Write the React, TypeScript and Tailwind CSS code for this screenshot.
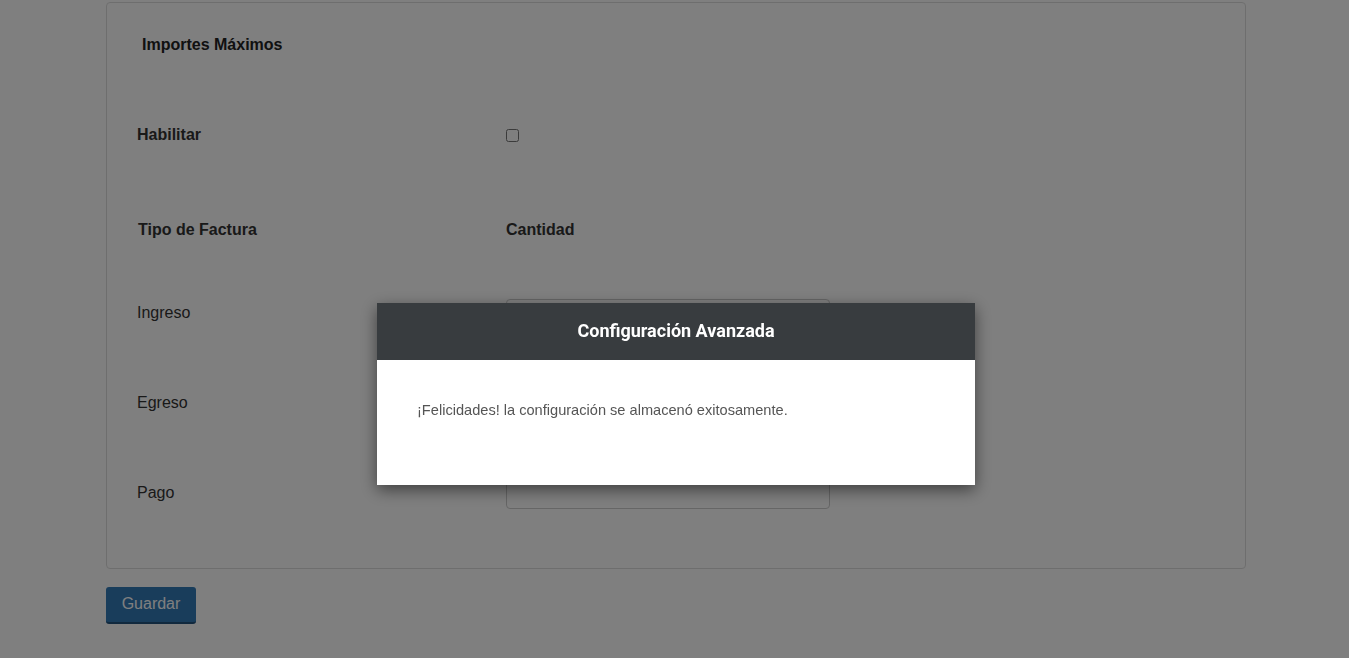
import React from 'react';

const ROWS = ['Ingreso', 'Egreso', 'Pago'];

export default function App() {
    return (
        <div className="min-h-[658px] bg-white text-[#333] font-['Liberation_Sans',Arial,sans-serif]">
            <div className="ml-[106px] w-[1140px] pt-[2px]">
                <section className="border border-[#dddddd] rounded pl-[30px] pb-[29px]">
                    <div className="h-[82px] pt-[2px] flex items-center pl-[5px]">
                        <h3 className="text-base font-bold text-[#222]">Importes Máximos</h3>
                    </div>
                    <div className="mt-[5px] h-[90px] flex items-center">
                        <label className="w-[369px] text-base font-bold">Habilitar</label>
                        <input type="checkbox" className="w-[13px] h-[13px] m-0" />
                    </div>
                    <div className="mt-[30px] h-[40px] flex items-center text-base font-bold">
                        <div className="w-[369px] pl-px">Tipo de Factura</div>
                        <div>Cantidad</div>
                    </div>
                    <div className="mt-[19px]">
                        {ROWS.map((r) => (
                            <div key={r} className="h-[90px] flex items-center">
                                <label className="w-[369px] text-base mb-[2px]">{r}</label>
                                <input type="text" className="w-[324px] h-[30px] border border-[#cccccc] rounded bg-white" />
                            </div>
                        ))}
                    </div>
                </section>
                <button className="mt-[18px] w-[90px] h-[37px] pb-[2px] bg-[#337ab7] border-b-2 border-[#23527c] rounded-[3px] text-white text-base">
                    Guardar
                </button>
            </div>

            {/* modal backdrop */}
            <div className="fixed inset-0 bg-black/50">
                <div className="ml-[377px] mt-[303px] w-[598px] bg-white shadow-[0_5px_15px_rgba(0,0,0,0.5)]">
                    <div className="h-[57px] pb-px bg-[#383c3f] flex items-center justify-center">
                        <h4 className="text-white text-lg font-bold font-['Roboto',sans-serif]">Configuración Avanzada</h4>
                    </div>
                    <div className="h-[125px] pt-[40px] px-10">
                        <p className="text-[14.6px] text-[#555] leading-5">¡Felicidades! la configuración se almacenó exitosamente.</p>
                    </div>
                </div>
            </div>
        </div>
    );
}
